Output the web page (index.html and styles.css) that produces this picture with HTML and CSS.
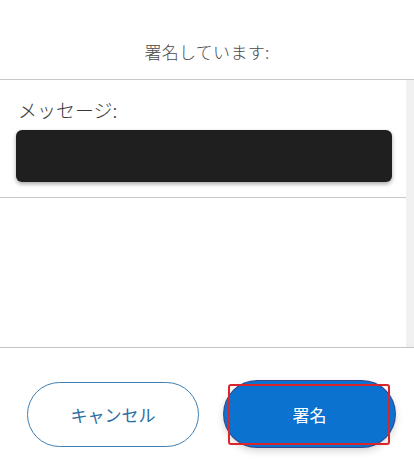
FILE: index.html
```html
<!DOCTYPE html>
<html lang="ja">
<head>
  <meta charset="UTF-8">
  <meta name="viewport" content="width=device-width, initial-scale=1">
  <title>署名</title>
  <link rel="stylesheet" href="styles.css">
</head>
<body>
<div class="sign-dialog">
  <div class="dialog-header">
    <h1>署名しています:</h1>
  </div>

  <div class="dialog-body">
    <div class="body-content">
      <div class="message-block">
        <div class="message-label">メッセージ:</div>
        <div class="message-box"></div>
      </div>
      <div class="body-rest"></div>
    </div>
    <div class="scroll-track"></div>
  </div>

  <div class="dialog-footer">
    <button type="button" class="btn btn-cancel">キャンセル</button>
    <button type="button" class="btn btn-sign">署名<span class="highlight"></span></button>
  </div>
</div>
</body>
</html>
```

FILE: styles.css
```css
body {
  margin: 0;
  background: #fff;
  font-family: "Noto Sans CJK JP", "Noto Sans", sans-serif;
}

.sign-dialog {
  width: 414px;
  height: 466px;
  display: flex;
  flex-direction: column;
}

.dialog-header {
  height: 79px;
  display: flex;
  align-items: flex-end;
  justify-content: center;
  border-bottom: 1px solid #c8c8c8;
}

h1 {
  margin: 0 0 15px;
  font-size: 17px;
  font-weight: 300;
  color: #4a4a4a;
  line-height: 24px;
  letter-spacing: 0.3px;
}

.dialog-body {
  height: 267px;
  display: flex;
  border-bottom: 1px solid #c4c4c4;
}

.body-content {
  flex: 1;
  display: flex;
  flex-direction: column;
}

.message-block {
  padding: 17px 14px 15px 16px;
  border-bottom: 1px solid #c8c8c8;
}

.message-label {
  font-size: 19px;
  font-weight: 300;
  color: #3a3a3a;
  line-height: 26px;
  padding-left: 2px;
  margin-bottom: 7px;
}

.message-box {
  height: 52px;
  background: #1f1f1f;
  border-radius: 6px;
  box-shadow: 0 2px 4px rgba(0, 0, 0, 0.35);
}

.body-rest {
  flex: 1;
}

.scroll-track {
  width: 8px;
  background: #f1f1f1;
}

.dialog-footer {
  flex: 1;
  display: flex;
  align-items: flex-start;
  padding: 34px 0 0 27px;
  gap: 25px;
}

.btn {
  height: 65px;
  border-radius: 33px;
  font-family: inherit;
  font-size: 17px;
  cursor: pointer;
}

.btn-cancel {
  width: 172px;
  background: #fff;
  color: #2b6ca3;
  border: 1px solid #3f7fb3;
}

.btn-sign {
  position: relative;
  width: 171px;
  margin-top: -1px;
  height: 66px;
  background: #0b72cf;
  color: #fff;
  border: none;
  box-shadow: 0 0 0 1px #33468c, 0 3px 8px rgba(0, 0, 0, 0.2);
}

.highlight {
  position: absolute;
  left: 4px;
  right: 5px;
  top: 3px;
  bottom: 2px;
  border: 2px solid #d8262c;
  border-radius: 3px;
}
```
